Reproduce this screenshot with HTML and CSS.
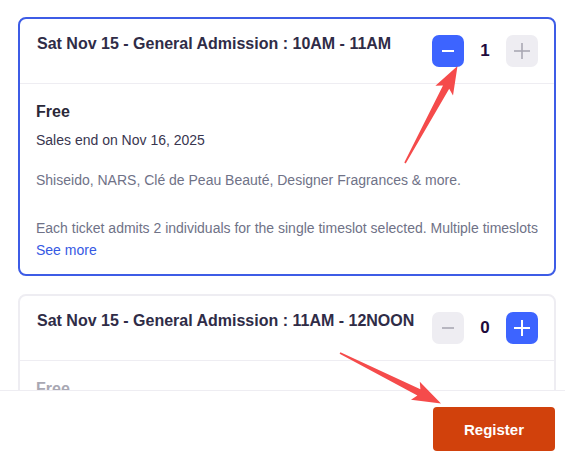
FILE: index.html
```html
<!DOCTYPE html>
<html lang="en">
<head>
<meta charset="utf-8">
<title>Tickets</title>
<link rel="stylesheet" href="styles.css">
</head>
<body>
<div class="page">
  <div class="scroll">
    <div class="ticket-list">
      <div class="card card-selected">
        <div class="card-head">
          <div class="card-title">Sat Nov 15 - General Admission : 10AM - 11AM</div>
          <div class="qty">
            <button class="qbtn qbtn-on" aria-label="Decrease">
              <svg viewBox="0 0 16 16" width="16" height="16"><line x1="2" y1="8" x2="14" y2="8"/></svg>
            </button>
            <span class="qty-num">1</span>
            <button class="qbtn qbtn-off" aria-label="Increase">
              <svg viewBox="0 0 16 16" width="16" height="16"><line x1="0" y1="8" x2="16" y2="8"/><line x1="8" y1="0" x2="8" y2="16"/></svg>
            </button>
          </div>
        </div>
        <div class="card-body">
          <div class="price">Free</div>
          <div class="sales">Sales end on Nov 16, 2025</div>
          <div class="desc">Shiseido, NARS, Clé de Peau Beauté, Designer Fragrances &amp; more.<br><br>Each ticket admits 2 individuals for the single timeslot selected. Multiple timeslots may be booked separately if you would like to attend more than once.</div>
          <a class="see-more" href="#">See more</a>
        </div>
      </div>

      <div class="card">
        <div class="card-head">
          <div class="card-title">Sat Nov 15 - General Admission : 11AM - 12NOON</div>
          <div class="qty">
            <button class="qbtn qbtn-off" aria-label="Decrease">
              <svg viewBox="0 0 16 16" width="16" height="16"><line x1="2" y1="8" x2="14" y2="8"/></svg>
            </button>
            <span class="qty-num">0</span>
            <button class="qbtn qbtn-on" aria-label="Increase">
              <svg viewBox="0 0 16 16" width="16" height="16"><line x1="0" y1="8" x2="16" y2="8"/><line x1="8" y1="0" x2="8" y2="16"/></svg>
            </button>
          </div>
        </div>
        <div class="card-body">
          <div class="price price-muted">Free</div>
          <div class="sales">Sales end on Nov 16, 2025</div>
        </div>
      </div>
    </div>
  </div>
  <div class="footer">
    <button class="register">Register</button>
  </div>

  <svg class="annot" viewBox="0 0 565 458" width="565" height="458">
    <polygon points="404.3,162.6 443,85.4 435.4,85.8 457.5,66 453,95.4 449.2,88.8 405.7,163.4"/>
    <polygon points="340.4,352.3 420.4,389.3 419.8,381.7 441,403.5 411,399.7 417.4,395.6 339.6,353.7"/>
  </svg>
</div>
</body>
</html>
```

FILE: styles.css
```css
* { box-sizing: border-box; }
html, body { margin: 0; padding: 0; background: #ffffff; }
body {
  font-family: "Liberation Sans", Arial, sans-serif;
  color: #39364f;
}
.page {
  position: relative;
  width: 565px;
  height: 458px;
  display: flex;
  flex-direction: column;
  overflow: hidden;
}
.scroll {
  height: 390px;
  overflow: hidden;
  flex: none;
}
.ticket-list {
  display: flex;
  flex-direction: column;
  gap: 18px;
  padding: 17px 9px 0 18px;
}
.card {
  border: 2px solid #eeedf2;
  border-radius: 8px;
  background: #fff;
}
.card-selected { border-color: #3d5ce6; }
.card-head {
  display: flex;
  align-items: flex-start;
  gap: 16px;
  padding: 16px 16px 16px 17px;
  border-bottom: 1px solid #eeedf2;
}
.card-title {
  flex: 1;
  font-size: 16px;
  font-weight: 700;
  line-height: 18px;
  color: #2f2c47;
}
.qty {
  display: flex;
  align-items: center;
  gap: 8px;
}
.qty-num {
  min-width: 26px;
  text-align: center;
  font-size: 17px;
  font-weight: 700;
  color: #1e0a3c;
}
.qbtn {
  width: 32px;
  height: 32px;
  border: 0;
  padding: 0;
  border-radius: 7px;
  display: flex;
  align-items: center;
  justify-content: center;
}
.qbtn svg line { stroke-width: 2; stroke-linecap: butt; }
.qbtn-on { background: #3d64ff; }
.qbtn-on svg line { stroke: #ffffff; }
.qbtn-off { background: #eeedf2; }
.qbtn-off svg line { stroke: #a9a8b3; stroke-width: 1.6; }
.card-body {
  padding: 16px 16px 14px 16px;
}
.price {
  font-size: 16px;
  font-weight: 700;
  line-height: 24px;
  color: #2a2838;
  margin-bottom: 6px;
}
.price-muted { color: #a9a8b3; }
.sales {
  font-size: 14px;
  line-height: 20px;
  color: #39364f;
  margin-bottom: 18px;
}
.desc {
  font-size: 14px;
  line-height: 24px;
  color: #6f7287;
  max-height: 72px;
  overflow: hidden;
}
.see-more {
  display: block;
  font-size: 14px;
  line-height: 20px;
  color: #3659e3;
  text-decoration: none;
}
.footer {
  flex: 1;
  border-top: 1px solid #eeedf2;
  display: flex;
  justify-content: flex-end;
  align-items: flex-start;
  padding: 16px 10px 0 0;
  background: #fff;
}
.register {
  width: 122px;
  height: 44px;
  border: 0;
  border-radius: 4px;
  background: #d1410c;
  color: #ffffff;
  font-family: "Liberation Sans", Arial, sans-serif;
  font-size: 15px;
  font-weight: 700;
}
.annot {
  position: absolute;
  left: 0;
  top: 0;
  pointer-events: none;
}
.annot polygon { fill: #f54b4b; }
```
